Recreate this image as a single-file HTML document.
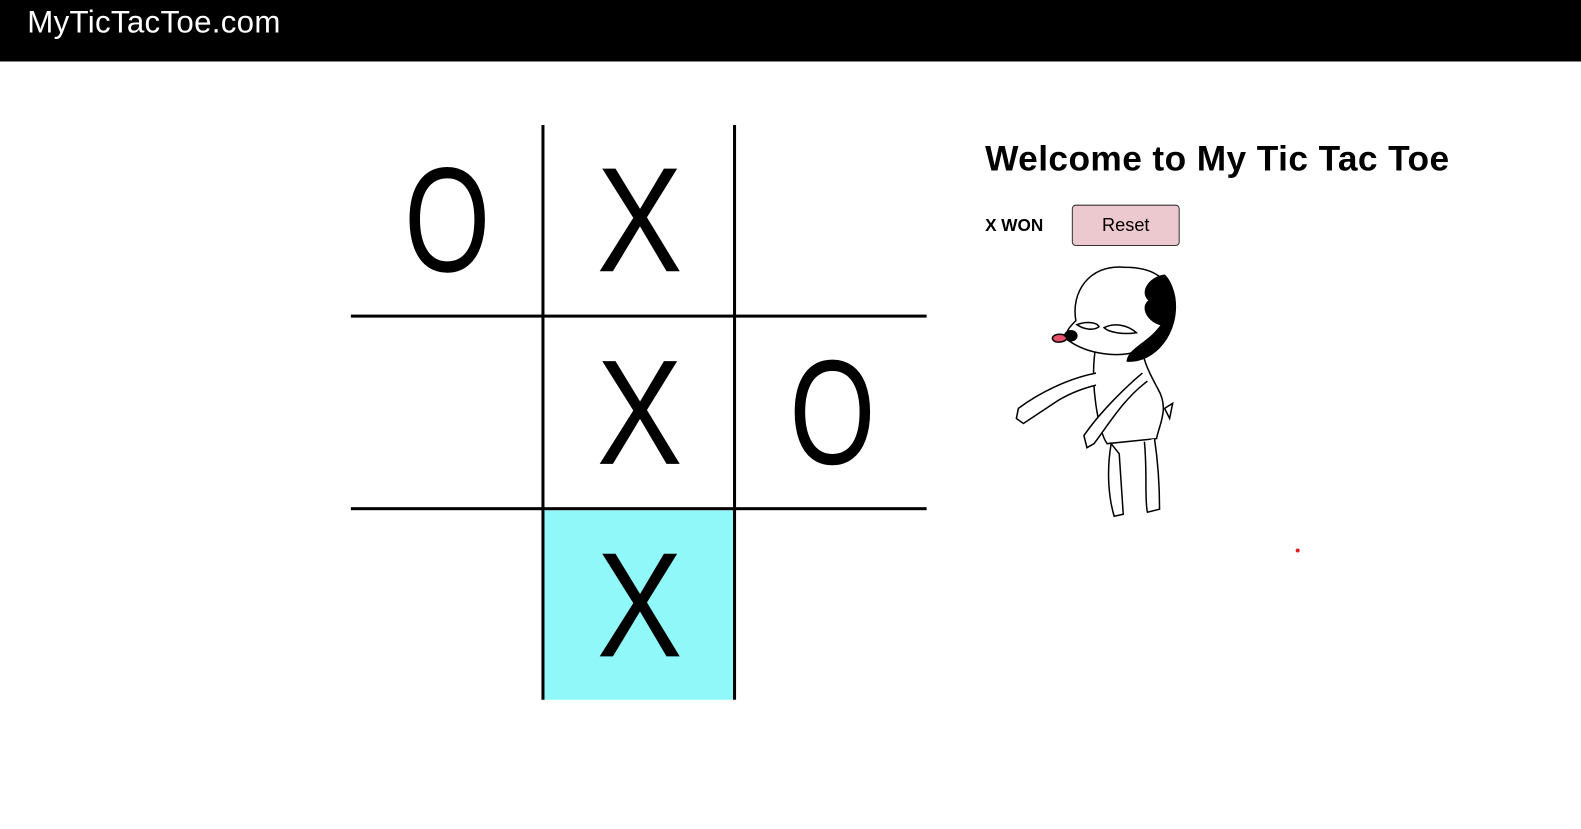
<!DOCTYPE html>
<html><head><style>
body{margin:0;width:1581px;height:822px;background:#fff;position:relative;overflow:hidden;font-family:"Liberation Sans",sans-serif}
#w{position:absolute;left:0;top:0;width:1581px;height:822px;transform:scale(1.0083);transform-origin:0 0}
.hdr{position:absolute;left:0;top:0;width:1581px;height:61px;background:#000}
.hdr span{position:absolute;left:27px;top:4px;color:#fff;font-size:31px;letter-spacing:0.3px}
.v{position:absolute;width:3px;background:#000;top:124px;height:570px}
.h{position:absolute;height:3px;background:#000;left:348px;width:571px}
.c{position:absolute;width:189px;height:189px;text-align:center;line-height:189px;font-size:148px;color:#000}
.o{display:inline-block;transform:scaleX(0.74)}
.x{display:inline-block;transform:scaleX(0.86)}
</style></head><body><div id="w">
<div class="hdr"><span>MyTicTacToe.com</span></div>
<div style="position:absolute;left:540px;top:506px;width:187px;height:188px;background:#90f8f8"></div>
<div class="v" style="left:537px"></div>
<div class="v" style="left:727px"></div>
<div class="h" style="top:312px"></div>
<div class="h" style="top:503px"></div>
<div class="c" style="left:349px;top:124px"><span class="o">O</span></div>
<div class="c" style="left:540px;top:124px"><span class="x">X</span></div>
<div class="c" style="left:540px;top:315px"><span class="x">X</span></div>
<div class="c" style="left:731px;top:315px"><span class="o">O</span></div>
<div class="c" style="left:540px;top:506px"><span class="x">X</span></div>
<div style="position:absolute;left:977px;top:138px;font-size:35px;font-weight:bold;letter-spacing:0.4px">Welcome to My Tic Tac Toe</div>
<div style="position:absolute;left:977px;top:214px;font-size:17px;font-weight:bold">X WON</div>
<div style="position:absolute;left:1063px;top:203px;width:105px;height:39px;background:#ecc8cf;border:1px solid #333;border-radius:4px;text-align:center;line-height:38px;font-size:18px">Reset</div>
<svg style="position:absolute;left:1000px;top:260px" width="180" height="260" viewBox="1000 260 180 260" fill="#fff" stroke="#000" stroke-width="1.5">
<path d="M1087 342 C1080 380 1090 430 1098 440 L1147 435 C1150 420 1160 405 1148 385 C1140 370 1135 360 1133 348 Z"/>
<path d="M1087 370 C1060 375 1030 390 1010 405 L1008 415 L1015 420 L1045 400 C1060 390 1075 385 1087 382"/>
<path d="M1133 370 C1115 385 1090 410 1075 432 L1078 444 L1085 440 C1100 420 1115 395 1138 378"/>
<path d="M1102 440 C1097 470 1100 495 1105 512 L1114 510 L1110 450 Z"/>
<path d="M1135 438 C1138 470 1135 495 1138 508 L1150 505 C1150 480 1148 455 1145 435"/>
<path d="M1155 405 L1163 400 L1160 415 Z"/>
<path d="M1115 265 C1080 262 1062 290 1067 318 C1060 325 1055 330 1060 338 C1080 352 1110 355 1130 348 C1160 335 1170 300 1160 285 C1150 270 1135 265 1115 265 Z"/>
<path fill="#000" d="M1155 273 C1140 275 1130 290 1140 298 C1130 305 1140 320 1152 322 C1140 340 1120 345 1118 358 C1145 360 1170 330 1165 295 C1163 285 1160 278 1155 273 Z"/>
<path d="M1068 322 C1078 318 1088 320 1090 324 C1085 328 1075 327 1068 322 Z"/>
<path d="M1095 325 C1105 320 1118 322 1127 330 C1115 332 1100 330 1095 325 Z"/>
<ellipse fill="#000" cx="1062" cy="333" rx="6" ry="5"/>
<path fill="#e8506a" d="M1055 332 C1045 330 1040 336 1047 339 C1053 340 1058 338 1058 335 Z"/>
</svg>
<div style="position:absolute;left:1285px;top:544px;width:4px;height:4px;border-radius:50%;background:#e02020"></div>
</div></body></html>
